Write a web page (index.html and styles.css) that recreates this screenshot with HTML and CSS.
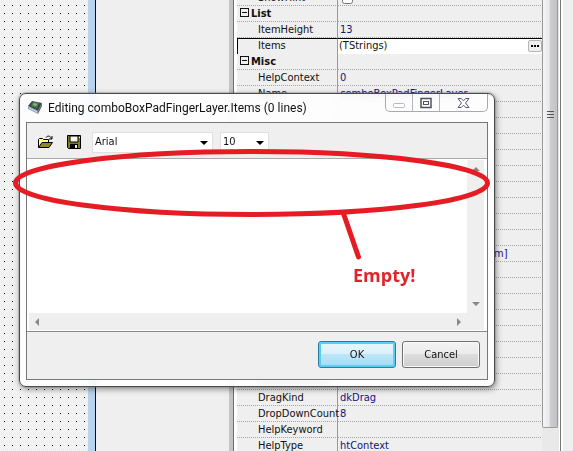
FILE: index.html
```html
<!DOCTYPE html>
<html lang="en">
<head>
<meta charset="utf-8">
<title>String List Editor</title>
<link rel="stylesheet" href="styles.css">
</head>
<body>
<main class="desktop">
  <div class="designer"></div>
  <div class="form-edge"></div>
  <div class="pane"></div>
  <div class="splitter"></div>
  <section class="inspector">
    <table class="props">
      <tbody>
        <tr><th>ShowHint</th><td><input class="check" type="checkbox" aria-label="ShowHint"></td></tr>
        <tr class="group"><th><span class="toggle"></span>List</th><td></td></tr>
        <tr><th>ItemHeight</th><td>13</td></tr>
        <tr class="selected"><th>Items</th><td><div class="editor"><span>(TStrings)</span><button class="more" aria-label="Edit items"><i></i><i></i><i></i></button></div></td></tr>
        <tr class="group"><th><span class="toggle"></span>Misc</th><td></td></tr>
        <tr><th>HelpContext</th><td>0</td></tr>
        <tr><th>Name</th><td>comboBoxPadFingerLayer</td></tr>
        <tr><th></th><td></td></tr>
        <tr><th></th><td></td></tr>
        <tr><th></th><td></td></tr>
        <tr><th></th><td></td></tr>
        <tr><th></th><td></td></tr>
        <tr><th></th><td></td></tr>
        <tr><th></th><td></td></tr>
        <tr><th></th><td></td></tr>
        <tr><th></th><td></td></tr>
        <tr><th></th><td class="tail">m]</td></tr>
        <tr><th></th><td></td></tr>
        <tr><th></th><td></td></tr>
        <tr><th></th><td></td></tr>
        <tr><th></th><td></td></tr>
        <tr><th></th><td></td></tr>
        <tr><th></th><td></td></tr>
        <tr><th></th><td></td></tr>
        <tr><th><span class="smudge"></span></th><td></td></tr>
        <tr><th>DragKind</th><td>dkDrag</td></tr>
        <tr><th>DropDownCount</th><td>8</td></tr>
        <tr><th>HelpKeyword</th><td></td></tr>
        <tr><th>HelpType</th><td>htContext</td></tr>
      </tbody>
    </table>
  </section>
  <div class="scroller"><div class="thumb"><i></i><i></i><i></i></div></div>
  <div class="margin"></div>
</main>

<section class="dialog">
  <header class="titlebar">
    <svg class="app-icon" width="16" height="16" viewBox="0 0 16 16">
      <path d="M1 7 5 2l10 2-4 8z" fill="#35484b"/>
      <path d="M1 7l10 5v3L1 10z" fill="#8ba4ad"/>
      <path d="M11 12l4-8v3l-4 8z" fill="#52656d"/>
      <path d="M4 7l2-4 6 1-2 5z" fill="#4c7e5e"/>
      <path d="M6 6l1-2 3 1-1 2z" fill="#a3b552"/>
      <path d="M2 9l8 4" stroke="#d3e0e6" stroke-width="1"/>
    </svg>
    <h1 class="title">Editing comboBoxPadFingerLayer.Items (0 lines)</h1>
    <div class="caption">
      <button class="cap" aria-label="Minimize"><svg width="14" height="12" viewBox="0 0 14 12"><rect x="1.500" y="6.500" width="11" height="4" rx="1" fill="#fff" stroke="#b9b9bd"/></svg></button>
      <button class="cap" aria-label="Maximize"><svg width="12" height="12" viewBox="0 0 12 12"><rect x="1" y="1.500" width="10" height="9" fill="#fff" stroke="#4c5061" stroke-width="1.500"/><rect x="3.500" y="4.500" width="5" height="3" fill="#fff" stroke="#4c5061"/></svg></button>
      <button class="cap close" aria-label="Close"><svg width="13" height="12" viewBox="0 0 13 12"><path d="M1 1.500h3.300l2.200 2.300 2.200-2.300H12L8.500 6l3.500 4.500H8.700L6.500 8.200l-2.200 2.300H1L4.500 6z" fill="#fff" stroke="#55586a"/></svg></button>
    </div>
  </header>
  <div class="client">
    <div class="toolbar">
      <button class="tool" aria-label="Open"><svg width="17" height="14" viewBox="0 0 17 14">
        <path d="M1.500 12.500v-8l1-1h3l1 1h5v3" fill="#ffff9a" stroke="#000"/>
        <path d="M1.500 12.500l3.500-5h10.500l-3.500 5z" fill="#8a8a20" stroke="#000"/>
        <path d="M9 2.500c1.500-2 4-2 5.500 1M15 1v3h-3" fill="none" stroke="#000"/>
      </svg></button>
      <button class="tool" aria-label="Save"><svg width="14" height="14" viewBox="0 0 14 14">
        <path d="M.5.500h13v13h-12l-1-1z" fill="#7d8020" stroke="#000"/>
        <path d="M3 1h8v6H3z" fill="#f4f4f4" stroke="#000"/>
        <path d="M3 9h8v5H3z" fill="#000"/><path d="M8 10h2v3H8z" fill="#eee"/>
        <path d="M12 2h1v1h-1z" fill="#fff"/>
      </svg></button>
      <div class="combo font-name"><select aria-label="Font"><option>Arial</option></select><i class="down"></i></div>
      <div class="combo font-size"><select aria-label="Size"><option>10</option></select><i class="down"></i></div>
    </div>
    <div class="memo">
      <textarea class="lines" aria-label="Lines"></textarea>
      <div class="vbar"><i class="up-arrow"></i><i class="down-arrow"></i></div>
      <div class="hbar"><i class="left-arrow"></i><i class="right-arrow"></i></div>
    </div>
    <footer class="actions">
      <button class="push default">OK</button>
      <button class="push">Cancel</button>
    </footer>
  </div>
</section>

<svg class="markup" width="573" height="451" viewBox="0 0 573 451">
  <ellipse cx="251.500" cy="183" rx="236" ry="31.500" fill="none" stroke="#e51c23" stroke-width="5"/>
  <path d="M344 215l14.500 42" stroke="#e51c23" stroke-width="5" stroke-linecap="round"/>
</svg>
<strong class="note">Empty!</strong>
</body>
</html>
```
FILE: styles.css
```css
* { box-sizing: border-box; }

body {
  margin: 0;
  height: 100vh;
  overflow: hidden;
  position: relative;
  background: #efefef;
  color: #111;
  font: 11px/16px "DejaVu Sans Condensed", "Open Sans", sans-serif;
}

button, select, textarea { font: inherit; color: inherit; margin: 0; padding: 0; }

.desktop {
  display: grid;
  grid-template-columns: 88px 8px 133px 8px 1fr 19px 12px;
  height: 100vh;
  overflow: hidden;
}

.designer {
  background:
    conic-gradient(from 90deg at 7px 7px, #000 25%, transparent 0) 5px 6px / 8px 8px,
    repeating-conic-gradient(#ececec 0 25%, #f6f6f6 0 50%) 0 0 / 2px 2px;
}

.form-edge { background: #b9d3ec; border-right: 1px solid #07131c; }

.splitter {
  background: linear-gradient(90deg, #c4c4c4 4px, #6c6c6c 4px 5px, #fff 5px);
}

.inspector { min-width: 0; }

.props {
  width: 100%;
  margin-top: -10px;
  border-collapse: separate;
  border-spacing: 0;
  table-layout: fixed;
}

.props th, .props td {
  height: 16px;
  padding: 1px 0 1px 2px;
  line-height: 14px;
  text-align: left;
  font-weight: normal;
  white-space: nowrap;
  background: repeating-linear-gradient(90deg, #a5a5a5 0 1px, transparent 1px 2px) bottom / 100% 1px no-repeat;
}

.props th { width: 101px; padding-left: 21px; border-right: 1px solid #9a9a9a; }
.props td { color: #13137e; }
.props .group th { padding-left: 3px; font-weight: bold; }
.props .tail { padding-left: 156px; }

.toggle {
  display: inline-block;
  width: 9px;
  height: 9px;
  margin-right: 2px;
  border: 1px solid #111;
  background: linear-gradient(#111, #111) center / 5px 1px no-repeat;
}

.check { display: block; width: 11px; height: 11px; margin: 0 2px; }

.props .selected th, .props .selected td { border-top: 1px solid #000; padding-top: 0; }
.props .selected th { border-left: 1px solid #000; padding-left: 20px; background: none; }
.props .selected td { padding-left: 1px; background: #fff; color: #111; }

.editor { display: flex; justify-content: space-between; align-items: center; }

.more {
  display: flex;
  justify-content: center;
  align-items: center;
  gap: 1px;
  width: 14px;
  height: 12px;
  border: 1px solid #b5b5b5;
  border-radius: 2px;
  background: #eee;
}
.more i { width: 2px; height: 2px; background: #000; }

.smudge { display: block; width: 72px; height: 6px; background: #999; filter: blur(2px); }

.scroller { background: linear-gradient(90deg, #e9e9e9 0 17px, #fff 17px 18px, #777 18px); }

.thumb {
  display: flex;
  flex-direction: column;
  align-items: center;
  gap: 2px;
  width: 16px;
  height: 95vh;
  padding-top: 111px;
  border: 1px solid #999;
  border-top: 0;
  border-radius: 0 0 2px 2px;
  background: linear-gradient(90deg, #f5f5f5, #e8e8e8 45%, #cfcfd2 50%, #c2c2c6);
}
.thumb i { width: 7px; height: 1px; background: #555; }

.margin { background: linear-gradient(90deg, #fff 2px, #efefef 2px); }

.dialog {
  position: absolute;
  top: 93px;
  left: 19px;
  right: 78px;
  padding: 0 6px 6px;
  border: 1px solid #4b4b4b;
  border-radius: 7px;
  background: rgba(255, 255, 255, .88);
  backdrop-filter: blur(3px);
  box-shadow: 0 0 0 1px rgba(120, 120, 120, .3), 1px 2px 6px rgba(0, 0, 0, .45);
}

.titlebar { display: flex; align-items: flex-start; height: 28px; }
.app-icon { margin: 5px 5px 0 1px; }

.title {
  flex: 1;
  margin: 6px 0 0;
  font: 12px/16px Roboto, "Open Sans", sans-serif;
  white-space: nowrap;
}

.caption {
  display: flex;
  height: 18px;
  border: 1px solid #a9a9ad;
  border-top: 0;
  border-radius: 0 0 5px 5px;
}

.cap {
  display: flex;
  justify-content: center;
  align-items: center;
  width: 27px;
  border: 0;
  border-right: 1px solid #b5b5b9;
  background: none;
}
.cap.close { width: 47px; border-right: 0; }

.client { border: 1px solid #777; background: #efefef; }

.toolbar { display: flex; align-items: center; height: 35px; padding: 3px 9px 0 10px; }
.tool { display: flex; width: 17px; padding: 0; border: 0; background: none; margin-right: 13px; }
.tool + .tool { margin-right: 8px; }

.combo { position: relative; height: 21px; border: 1px solid #e0e0e0; background: #fff; }
.combo select { width: 100%; height: 19px; padding-left: 2px; border: 0; appearance: none; background: none; }
.font-name { width: 121px; margin-right: 7px; }
.font-size { width: 49px; }

.down {
  position: absolute;
  right: 4px;
  top: 8px;
  border: 4px solid transparent;
  border-top-color: #000;
  border-bottom: 0;
}

.memo {
  display: grid;
  grid-template: 153px 17px / 1fr 17px;
  padding: 1px 3px 1px 2px;
  border-top: 1px solid #aaa;
  border-bottom: 1px solid #888;
  background: #fff;
}

.lines { width: 100%; height: 100%; border: 0; resize: none; background: #fff; }
.vbar, .hbar { display: flex; justify-content: space-between; align-items: center; background: #efefef; }
.vbar { flex-direction: column; padding: 7px 0; }
.hbar { grid-column: 1 / 3; padding: 0 23px 0 6px; }
.vbar i, .hbar i { border: 4px solid transparent; }
.vbar .up-arrow { border-top: 0; border-bottom-color: #888; }
.vbar .down-arrow { border-bottom: 0; border-top-color: #888; }
.hbar .left-arrow { border-left: 0; border-right-color: #888; }
.hbar .right-arrow { border-right: 0; border-left-color: #888; }

.actions { display: flex; justify-content: flex-end; gap: 6px; padding: 9px 7px 11px; }

.push {
  width: 78px;
  height: 27px;
  border: 1px solid #707070;
  border-radius: 3px;
  background: linear-gradient(#f3f3f3, #ebebeb 50%, #dcdcdc 50%, #cfcfcf);
  box-shadow: inset 0 0 0 1px #fafafa;
}
.push.default {
  border-color: #2a7ca3;
  background: linear-gradient(#eaf7fd, #d8f0fb 50%, #bde6f9 50%, #a5dcf4);
  box-shadow: inset 0 0 0 2px #5ccdf2;
}

.markup { position: absolute; top: 0; left: 0; pointer-events: none; }

.note {
  position: absolute;
  top: 263px;
  left: 353px;
  color: #e0242b;
  font: bold 18px/24px "Open Sans", sans-serif;
}
```
